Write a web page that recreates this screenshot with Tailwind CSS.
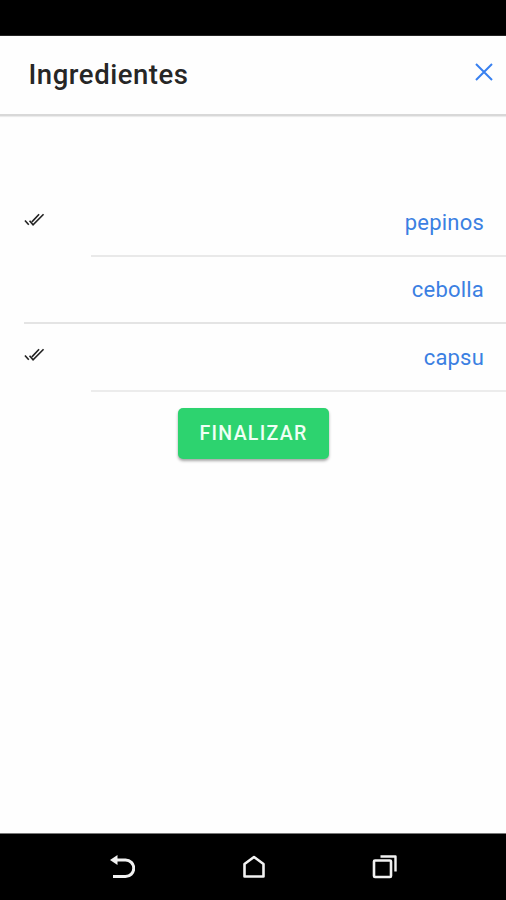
<!DOCTYPE html>
<html lang="es">
<head>
<meta charset="utf-8">
<title>Ingredientes</title>
<script src="https://cdn.jsdelivr.net/npm/@tailwindcss/browser@4"></script>
</head>
<body class="bg-[#fefefe] font-[Roboto,sans-serif]">
<div class="flex h-[900px] w-[506px] flex-col overflow-hidden">
  <div class="h-9 shrink-0 bg-black"></div>
  <header class="flex h-[78px] shrink-0 items-center justify-between bg-[#fefefe] pr-[12px] pl-[28.5px] shadow-[0_1px_1px_1px_#d8d8d8,0_3px_1px_0_#efefef]">
    <h1 class="text-[27.5px] leading-9 font-medium tracking-[0.55px] text-[#262626]">Ingredientes</h1>
    <button aria-label="Cerrar" class="-mt-[6px]">
      <svg class="block h-5 w-5" viewBox="0 0 20 20" fill="none" stroke="#3880f0" stroke-width="2"><path d="M2 2L18 18M18 2L2 18"/></svg>
    </button>
  </header>
  <main class="flex-1 pt-[76px]">
    <ul class="pl-6 text-[22px] text-[#3b80e2]">
      <li class="flex h-[67px]">
        <svg class="mt-[23px] h-[14px] w-[21px] shrink-0" viewBox="0 0 22 14" fill="none" stroke="#222" stroke-width="1.7"><path d="M1 7.500L5 12M5.800 7.800L9.500 12L20.500 1M8.300 9L15.800 1"/></svg>
        <div class="ml-[46px] flex flex-1 items-center justify-end border-b-2 border-[#e9e9e9] pr-[22px]"><span class="tracking-[0.2px]">pepinos</span></div>
      </li>
      <li class="flex h-[67px] items-center justify-end border-b-2 border-[#e4e4e4] pr-[22px]"><span class="tracking-[0.2px]">cebolla</span></li>
      <li class="flex h-[68px]">
        <svg class="mt-[24px] h-[14px] w-[21px] shrink-0" viewBox="0 0 22 14" fill="none" stroke="#222" stroke-width="1.7"><path d="M1 7.500L5 12M5.800 7.800L9.500 12L20.500 1M8.300 9L15.800 1"/></svg>
        <div class="ml-[46px] flex flex-1 items-center justify-end border-b-2 border-[#ececec] pr-[22px]"><span class="tracking-[0.2px]">capsu</span></div>
      </li>
    </ul>
    <div class="flex justify-center pt-[16px] pl-px">
      <button class="h-[51px] w-[151px] rounded-[5px] bg-[#2dd36f] text-[19.5px] font-medium tracking-[1.3px] text-[#f0fff5] shadow-[0_2px_3px_rgba(0,0,0,0.35)]">FINALIZAR</button>
    </div>
  </main>
  <nav class="flex h-[67px] shrink-0 items-center justify-between border-t border-[#777] bg-black pr-[108px] pl-[109px]">
    <svg class="h-[26px] w-[26px]" viewBox="0 0 26 26" fill="none" stroke="#f2f2f2" stroke-width="3"><path d="M7 6H16.500A8.250 8.250 0 0 1 16.500 22.500H4"/><path d="M1 6L8.500 1V11Z" fill="#f2f2f2" stroke="none"/></svg>
    <svg class="h-[26px] w-[26px]" viewBox="0 0 26 26" fill="none" stroke="#f2f2f2" stroke-width="2.600" stroke-linejoin="round"><path d="M13 3L22.500 10V22.500H3.500V10Z"/></svg>
    <svg class="h-[26px] w-[26px]" viewBox="0 0 26 26" fill="none" stroke="#f2f2f2" stroke-width="2.600" stroke-linejoin="round"><rect x="2" y="6.500" width="17" height="16.500" rx="1"/><path d="M8.500 2.500H23.500V17.500" stroke-width="2.400"/></svg>
  </nav>
</div>
</body>
</html>
